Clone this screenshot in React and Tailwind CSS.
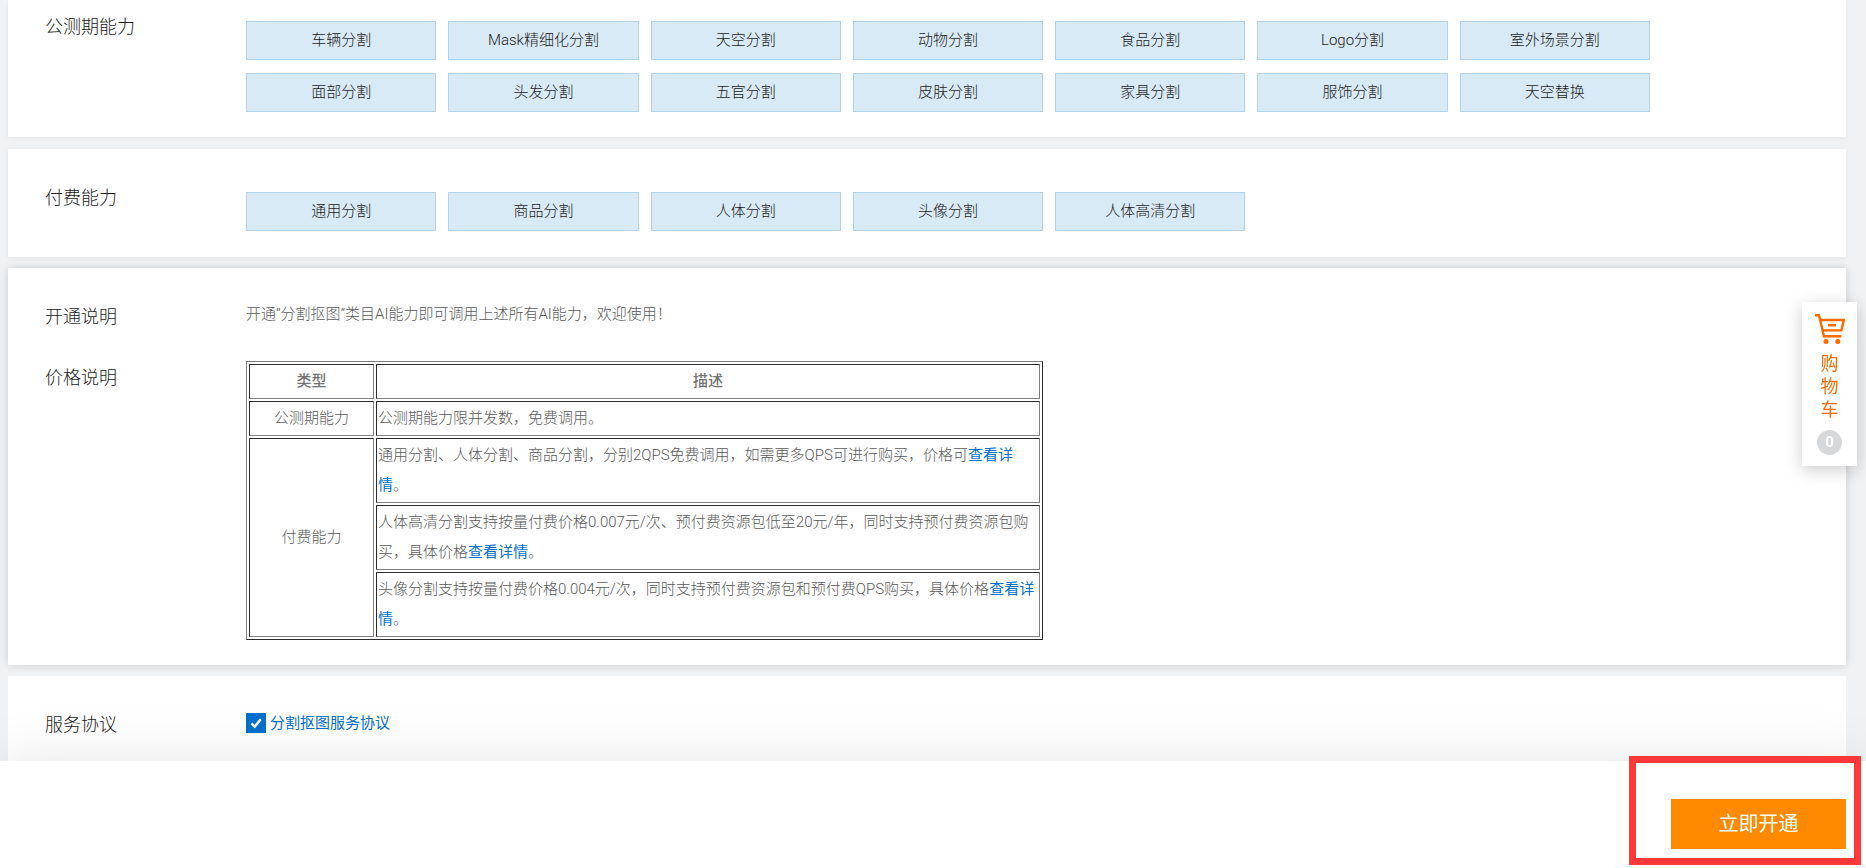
const betaAbilities = [
  '车辆分割', 'Mask精细化分割', '天空分割', '动物分割', '食品分割', 'Logo分割', '室外场景分割',
  '面部分割', '头发分割', '五官分割', '皮肤分割', '家具分割', '服饰分割', '天空替换',
];
const paidAbilities = ['通用分割', '商品分割', '人体分割', '头像分割', '人体高清分割'];

const cell = 'border border-t-[#2c2c2c] border-l-[#2c2c2c] border-r-[#808080] border-b-[#808080] px-px pt-px pb-[2px]';

function Row({ label, className = '', labelClassName = '', children }) {
  return (
    <div className={`flex ${className}`}>
      <h2 className={`w-[201px] shrink-0 text-[18px] leading-[26px] text-[#1a1a1a] ${labelClassName}`}>{label}</h2>
      <div className="min-w-0 flex-1">{children}</div>
    </div>
  );
}

function Tags({ items }) {
  return (
    <ul className="mt-[7px] grid max-w-[1404px] grid-cols-7 gap-x-3 gap-y-[13px]">
      {items.map((name) => (
        <li key={name} className="flex h-[39px] items-center justify-center border border-[#b2d3ec] bg-[#d8eaf6] pb-[2px] text-[#1a1a1a]">
          {name}
        </li>
      ))}
    </ul>
  );
}

function Detail() {
  return <a href="#detail" className="font-normal text-[#0070cc]">查看详情</a>;
}

function PriceTable() {
  return (
    <table className="w-full max-w-[797px] table-fixed border-separate border-spacing-[2px] border border-t-[#808080] border-l-[#808080] border-r-[#2c2c2c] border-b-[#2c2c2c] leading-[30px] text-[#595959]">
      <colgroup>
        <col className="w-[125px]" />
        <col />
      </colgroup>
      <thead className="text-[#737373]">
        <tr>
          <th className={`${cell} font-medium`}>类型</th>
          <th className={`${cell} font-medium`}>描述</th>
        </tr>
      </thead>
      <tbody>
        <tr>
          <td className={`${cell} text-center`}>公测期能力</td>
          <td className={cell}>公测期能力限并发数，免费调用。</td>
        </tr>
        <tr>
          <td rowSpan={3} className={`${cell} text-center`}>付费能力</td>
          <td className={cell}>通用分割、人体分割、商品分割，分别2QPS免费调用，如需更多QPS可进行购买，价格可<Detail />。</td>
        </tr>
        <tr>
          <td className={cell}>人体高清分割支持按量付费价格0.007元/次、预付费资源包低至20元/年，同时支持预付费资源包购买，具体价格<Detail />。</td>
        </tr>
        <tr>
          <td className={cell}>头像分割支持按量付费价格0.004元/次，同时支持预付费资源包和预付费QPS购买，具体价格<Detail />。</td>
        </tr>
      </tbody>
    </table>
  );
}

function Cart() {
  return (
    <a href="#cart" className="fixed top-[302px] right-[9px] z-20 flex w-[55px] flex-col items-center bg-white pt-3 pb-[11px] font-normal text-[#ff6a00] shadow-[0_4px_16px_rgba(0,0,0,0.2)]">
      <svg width="30" height="30" viewBox="0 0 30 30" fill="none" stroke="currentColor" strokeWidth="2.4" aria-hidden="true">
        <path d="M0 1.2H4L8.9 22.3H26.3M5.2 6H28.8L26.4 16.4H7.6M13 11.2H21" />
        <circle cx="11" cy="27.5" r="2.5" fill="currentColor" stroke="none" />
        <circle cx="22.8" cy="27.5" r="2.5" fill="currentColor" stroke="none" />
      </svg>
      <span className="mt-2 w-[18px] text-[18px] leading-[23px]">购物车</span>
      <span className="mt-[9px] flex size-[25px] items-center justify-center rounded-full bg-[#d7d8d9] font-bold leading-none text-white">0</span>
    </a>
  );
}

export default function App() {
  return (
    <div className="flex min-h-screen flex-col bg-[#f1f2f4] font-[Roboto,'Noto_Sans_CJK_SC',sans-serif] text-[15px] leading-[22px] font-light">
      <main className="flex flex-1 flex-col pr-5 pl-2">
        <section className="bg-white pr-8 pb-[25px] pl-[37px] pt-[14px] shadow-[0_1px_4px_rgba(0,0,0,0.06)]">
          <Row label="公测期能力"><Tags items={betaAbilities} /></Row>
        </section>
        <section className="mt-3 bg-white pr-8 pb-[26px] pl-[37px] pt-9 shadow-[0_1px_4px_rgba(0,0,0,0.06)]">
          <Row label="付费能力"><Tags items={paidAbilities} /></Row>
        </section>
        <section className="mt-[11px] bg-white pr-8 pb-[25px] pl-[37px] pt-9 shadow-[0_0_9px_rgba(0,0,0,0.16)]">
          <Row label="开通说明">
            <p className="leading-5 text-[#595959]">开通“分割抠图”类目AI能力即可调用上述所有AI能力，欢迎使用！</p>
          </Row>
          <Row label="价格说明" className="mt-[31px]" labelClassName="pt-1">
            <PriceTable />
          </Row>
        </section>
        <section className="mt-[11px] flex-1 bg-white pr-8 pb-5 pl-[37px] pt-9">
          <Row label="服务协议">
            <div className="flex items-center">
              <span className="grid size-5">
                <input id="agreement" type="checkbox" defaultChecked className="peer col-start-1 row-start-1 size-5 appearance-none border border-[#0070cc] checked:bg-[#0070cc]" />
                <svg viewBox="0 0 20 20" className="pointer-events-none col-start-1 row-start-1 hidden size-5 peer-checked:block" fill="none" stroke="#fff" strokeWidth="2.4" aria-hidden="true">
                  <path d="M5.5 10.3L8.7 13.6L14.8 6.2" />
                </svg>
              </span>
              <label htmlFor="agreement" className="ml-1 font-normal text-[#0070cc]">分割抠图服务协议</label>
            </div>
          </Row>
        </section>
      </main>
      <footer className="relative z-10 flex justify-end bg-white pt-[38px] pr-5 pb-[19px] shadow-[0_0_60px_rgba(0,0,0,0.1)]">
        <button type="button" className="h-[50px] w-[175px] bg-[#ff8a00] text-[20px] font-normal text-white">立即开通</button>
        <div className="pointer-events-none absolute -top-[5px] right-[5px] bottom-[3px] w-[232px] border-[7px] border-[#fc3838]" />
      </footer>
      <Cart />
    </div>
  );
}
